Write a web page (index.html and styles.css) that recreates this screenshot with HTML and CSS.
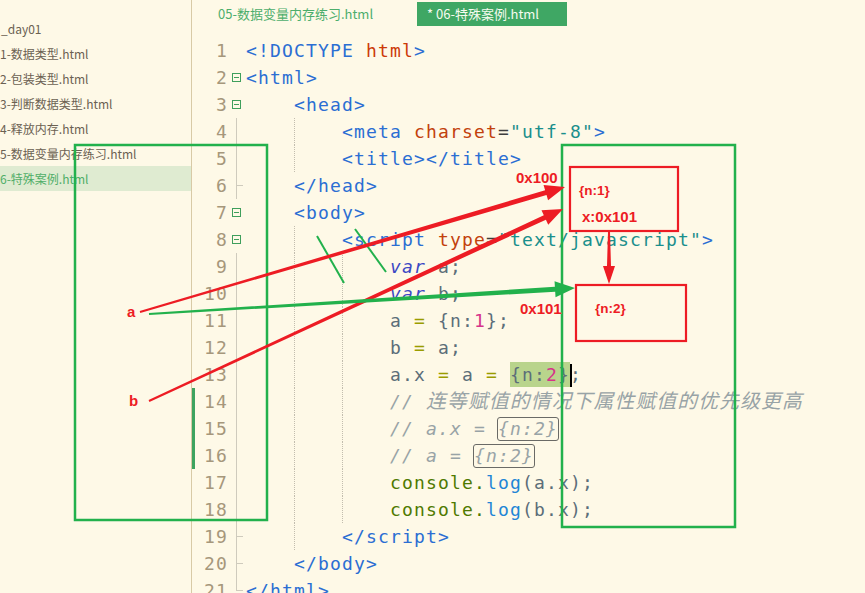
FILE: index.html
```html
<!DOCTYPE html>
<html lang="zh">
<head>
<meta charset="utf-8">
<title>06-特殊案例</title>
<link rel="stylesheet" href="styles.css">
</head>
<body>
<div class="app">
  <aside class="sidebar">
    <div class="tree">
      <div class="item root">_day01</div>
      <div class="item">1-数据类型.html</div>
      <div class="item">2-包装类型.html</div>
      <div class="item">3-判断数据类型.html</div>
      <div class="item">4-释放内存.html</div>
      <div class="item">5-数据变量内存练习.html</div>
      <div class="item selected">6-特殊案例.html</div>
    </div>
  </aside>
  <main class="editor">
    <div class="tabs">
      <div class="tab">05-数据变量内存练习.html</div>
      <div class="tab active">* 06-特殊案例.html</div>
    </div>
    <div class="code">
      <div class="row"><span class="ln">1</span><span class="fd"></span><span class="cd"><span class="tg">&lt;!DOCTYPE</span> <span class="dt">html</span><span class="tg">&gt;</span></span></div>
      <div class="row"><span class="ln">2</span><span class="fd"><i class="mk"></i></span><span class="cd"><span class="tg">&lt;html&gt;</span></span></div>
      <div class="row"><span class="ln">3</span><span class="fd"><i class="mk"></i></span><span class="cd"><i class="ind"></i><span class="tg">&lt;head&gt;</span></span></div>
      <div class="row"><span class="ln">4</span><span class="fd v"></span><span class="cd"><i class="ind"></i><i class="ind g"></i><span class="tg">&lt;meta</span> <span class="at">charset</span><span class="eq">=</span><span class="st">"utf-8"</span><span class="tg">&gt;</span></span></div>
      <div class="row"><span class="ln">5</span><span class="fd v"></span><span class="cd"><i class="ind"></i><i class="ind g"></i><span class="tg">&lt;title&gt;&lt;/title&gt;</span></span></div>
      <div class="row"><span class="ln">6</span><span class="fd v end"></span><span class="cd"><i class="ind"></i><span class="tg">&lt;/head&gt;</span></span></div>
      <div class="row"><span class="ln">7</span><span class="fd"><i class="mk"></i></span><span class="cd"><i class="ind"></i><span class="tg">&lt;body&gt;</span></span></div>
      <div class="row"><span class="ln">8</span><span class="fd"><i class="mk"></i></span><span class="cd"><i class="ind"></i><i class="ind g"></i><span class="tg">&lt;script</span> <span class="at">type</span><span class="eq">=</span><span class="st">"text/javascript"</span><span class="tg">&gt;</span></span></div>
      <div class="row"><span class="ln">9</span><span class="fd v"></span><span class="cd"><i class="ind"></i><i class="ind g"></i><i class="ind g"></i><span class="kw">var</span><span class="id"> a;</span></span></div>
      <div class="row"><span class="ln">10</span><span class="fd v"></span><span class="cd"><i class="ind"></i><i class="ind g"></i><i class="ind g"></i><span class="kw">var</span><span class="id"> b;</span></span></div>
      <div class="row"><span class="ln">11</span><span class="fd v"></span><span class="cd"><i class="ind"></i><i class="ind g"></i><i class="ind g"></i><span class="id">a </span><span class="op">=</span><span class="id"> {n:</span><span class="nm">1</span><span class="id">};</span></span></div>
      <div class="row"><span class="ln">12</span><span class="fd v"></span><span class="cd"><i class="ind"></i><i class="ind g"></i><i class="ind g"></i><span class="id">b </span><span class="op">=</span><span class="id"> a;</span></span></div>
      <div class="row"><span class="ln">13</span><span class="fd v"></span><span class="cd"><i class="ind"></i><i class="ind g"></i><i class="ind g"></i><span class="id">a.x </span><span class="op">=</span><span class="id"> a </span><span class="op">=</span><span class="id"> </span><span class="sel"><span class="id">{n:</span><span class="nm">2</span><span class="id">}</span></span><i class="caret"></i><span class="id">;</span></span></div>
      <div class="row"><span class="ln chg">14</span><span class="fd v"></span><span class="cd"><i class="ind"></i><i class="ind g"></i><i class="ind g"></i><span class="cm">// <span class="cjk">连等赋值的情况下属性赋值的优先级更高</span></span></span></div>
      <div class="row"><span class="ln chg">15</span><span class="fd v"></span><span class="cd"><i class="ind"></i><i class="ind g"></i><i class="ind g"></i><span class="cm">// a.x = <span class="bx">{n:2}</span></span></span></div>
      <div class="row"><span class="ln chg">16</span><span class="fd v"></span><span class="cd"><i class="ind"></i><i class="ind g"></i><i class="ind g"></i><span class="cm">// a = <span class="bx">{n:2}</span></span></span></div>
      <div class="row"><span class="ln">17</span><span class="fd v"></span><span class="cd"><i class="ind"></i><i class="ind g"></i><i class="ind g"></i><span class="fn">console.</span><span class="me">log</span><span class="id">(a.x);</span></span></div>
      <div class="row"><span class="ln">18</span><span class="fd v"></span><span class="cd"><i class="ind"></i><i class="ind g"></i><i class="ind g"></i><span class="fn">console.</span><span class="me">log</span><span class="id">(b.x);</span></span></div>
      <div class="row"><span class="ln">19</span><span class="fd v end"></span><span class="cd"><i class="ind"></i><i class="ind g"></i><span class="tg">&lt;/script&gt;</span></span></div>
      <div class="row"><span class="ln">20</span><span class="fd v end"></span><span class="cd"><i class="ind"></i><span class="tg">&lt;/body&gt;</span></span></div>
      <div class="row"><span class="ln">21</span><span class="fd last"></span><span class="cd"><span class="tg">&lt;/html&gt;</span></span></div>
    </div>
  </main>
</div>

<svg class="overlay" width="865" height="593" viewBox="0 0 865 593">
  <rect x="75" y="145" width="192" height="375" fill="none" stroke="#22b14c" stroke-width="2.5"/>
  <rect x="562" y="145" width="173" height="382" fill="none" stroke="#22b14c" stroke-width="2.5"/>
  <rect x="570" y="167" width="108" height="64" fill="none" stroke="#ed1c24" stroke-width="2.2"/>
  <rect x="576" y="285" width="110" height="56" fill="none" stroke="#ed1c24" stroke-width="2.2"/>
  <line x1="317" y1="236" x2="344" y2="283" stroke="#22b14c" stroke-width="2"/>
  <line x1="355" y1="229" x2="386" y2="272" stroke="#22b14c" stroke-width="2"/>
  <polygon fill="#ed1c24" points="140.28,312.96 546.52,195.04 548.07,200.32 565,187 543.55,184.96 545.10,190.24 139.72,311.04"/>
  <polygon fill="#ed1c24" points="149.42,401.91 545.91,219.68 548.23,224.67 563,209 541.49,210.15 543.81,215.14 148.58,400.09"/>
  <polygon fill="#22b14c" points="149.06,315 555.19,291.72 555.53,297.21 575,288 554.55,281.24 554.89,286.72 148.94,313"/>
  <polygon fill="#ed1c24" points="608,232 607,266 603,266 609,284 615,266 611,266 610,232"/>
  <text class="ann big" x="516" y="183">0x100</text>
  <text class="ann big" x="520" y="314">0x101</text>
  <text class="ann small" x="579" y="195">{n:1}</text>
  <text class="ann big" x="582" y="222">x:0x101</text>
  <text class="ann small" x="595" y="313">{n:2}</text>
  <text class="ann big" x="127" y="317">a</text>
  <text class="ann big" x="129" y="406">b</text>
</svg>
</body>
</html>
```
FILE: styles.css
```css
html, body {
  margin: 0;
  padding: 0;
}
body {
  width: 865px;
  height: 593px;
  overflow: hidden;
  position: relative;
  background: #fef9e7;
  font-family: "Noto Sans CJK SC", "Noto Sans", sans-serif;
}

.app {
  display: flex;
  height: 593px;
}

/* ---------- sidebar ---------- */
.sidebar {
  flex: none;
  width: 191px;
  border-right: 1px solid #d8caa6;
  overflow: hidden;
}
.tree {
  padding-top: 16px;
}
.item {
  height: 25px;
  line-height: 25px;
  font-size: 12px;
  color: #6b6152;
  white-space: nowrap;
}
.item.root {
  padding-left: 1px;
}
.item.selected {
  background: #dfebd1;
  color: #4fae68;
}

/* ---------- editor ---------- */
.editor {
  flex: 1;
  display: flex;
  flex-direction: column;
  min-width: 0;
}
.tabs {
  height: 30px;
  box-sizing: border-box;
  padding-top: 2px;
  display: flex;
  align-items: flex-start;
}
.tab {
  height: 24px;
  line-height: 24px;
  font-size: 13px;
  white-space: nowrap;
  box-sizing: border-box;
  width: 225px;
  padding-left: 26px;
  color: #4dae6c;
}
.tab.active {
  width: 150px;
  padding-left: 10px;
  background: #3fa764;
  color: #f6fbef;
}

.code {
  padding-top: 11px;
  font-family: "DejaVu Sans Mono", "Noto Sans CJK SC", monospace;
  font-size: 18px;
  letter-spacing: 1.16px;
}
.row {
  display: grid;
  grid-template-columns: 36px 18px 1fr;
  height: 27px;
  line-height: 27px;
  white-space: pre;
}
.ln {
  text-align: right;
  color: #a6977b;
}
.ln.chg {
  box-shadow: inset 3px 0 #3ea35f;
}
.fd {
  display: flex;
  align-items: center;
}
.fd.v {
  background: linear-gradient(#cfcbbd, #cfcbbd) 8px 0 / 1px 100% no-repeat;
}
.fd.v.end {
  background:
    linear-gradient(#cfcbbd, #cfcbbd) 8px 0 / 1px 100% no-repeat,
    linear-gradient(#cfcbbd, #cfcbbd) 8px 13px / 7px 1px no-repeat;
}
.fd.last {
  background:
    linear-gradient(#cfcbbd, #cfcbbd) 8px 0 / 1px 14px no-repeat,
    linear-gradient(#cfcbbd, #cfcbbd) 8px 13px / 7px 1px no-repeat;
}
.mk {
  display: block;
  width: 9px;
  height: 9px;
  box-sizing: border-box;
  margin-left: 4px;
  border: 1px solid #3f9f5c;
  background: linear-gradient(#3f9f5c, #3f9f5c) center / 5px 1px no-repeat;
}
.cd {
  overflow: hidden;
}
.ind {
  display: inline-block;
  width: 48px;
  height: 27px;
  vertical-align: top;
  box-sizing: border-box;
}
.ind.g {
  border-left: 1px dotted #c2bdae;
}

/* syntax colours */
.tg { color: #2b6ed3; }
.dt { color: #cc3a08; }
.at { color: #c2410c; }
.eq { color: #3e3e3e; }
.st { color: #1a8f8c; }
.kw { color: #3b48c4; font-style: italic; }
.id { color: #5c6e79; }
.op { color: #9a9c00; }
.nm { color: #d6338a; }
.cm { color: #98a3a6; font-style: italic; }
.fn { color: #4f7900; }
.me { color: #1f86d6; }

.cjk {
  font-size: 19.8px;
}
.sel {
  display: inline-block;
  line-height: 25px;
  background: #b9d48c;
}
.caret {
  display: inline-block;
  width: 2px;
  height: 23px;
  margin-right: -2px;
  background: #000;
  vertical-align: -6px;
}
.bx {
  display: inline-block;
  line-height: 22px;
  border: 1px solid #6a6a66;
  border-radius: 3px;
  margin-left: -1px;
}

/* ---------- annotation overlay ---------- */
.overlay {
  position: absolute;
  left: 0;
  top: 0;
  pointer-events: none;
}
.ann {
  fill: #ed1c24;
  font-family: "Liberation Sans", Arial, sans-serif;
  font-weight: bold;
}
.ann.big {
  font-size: 15px;
}
.ann.small {
  font-size: 13.5px;
}
```
